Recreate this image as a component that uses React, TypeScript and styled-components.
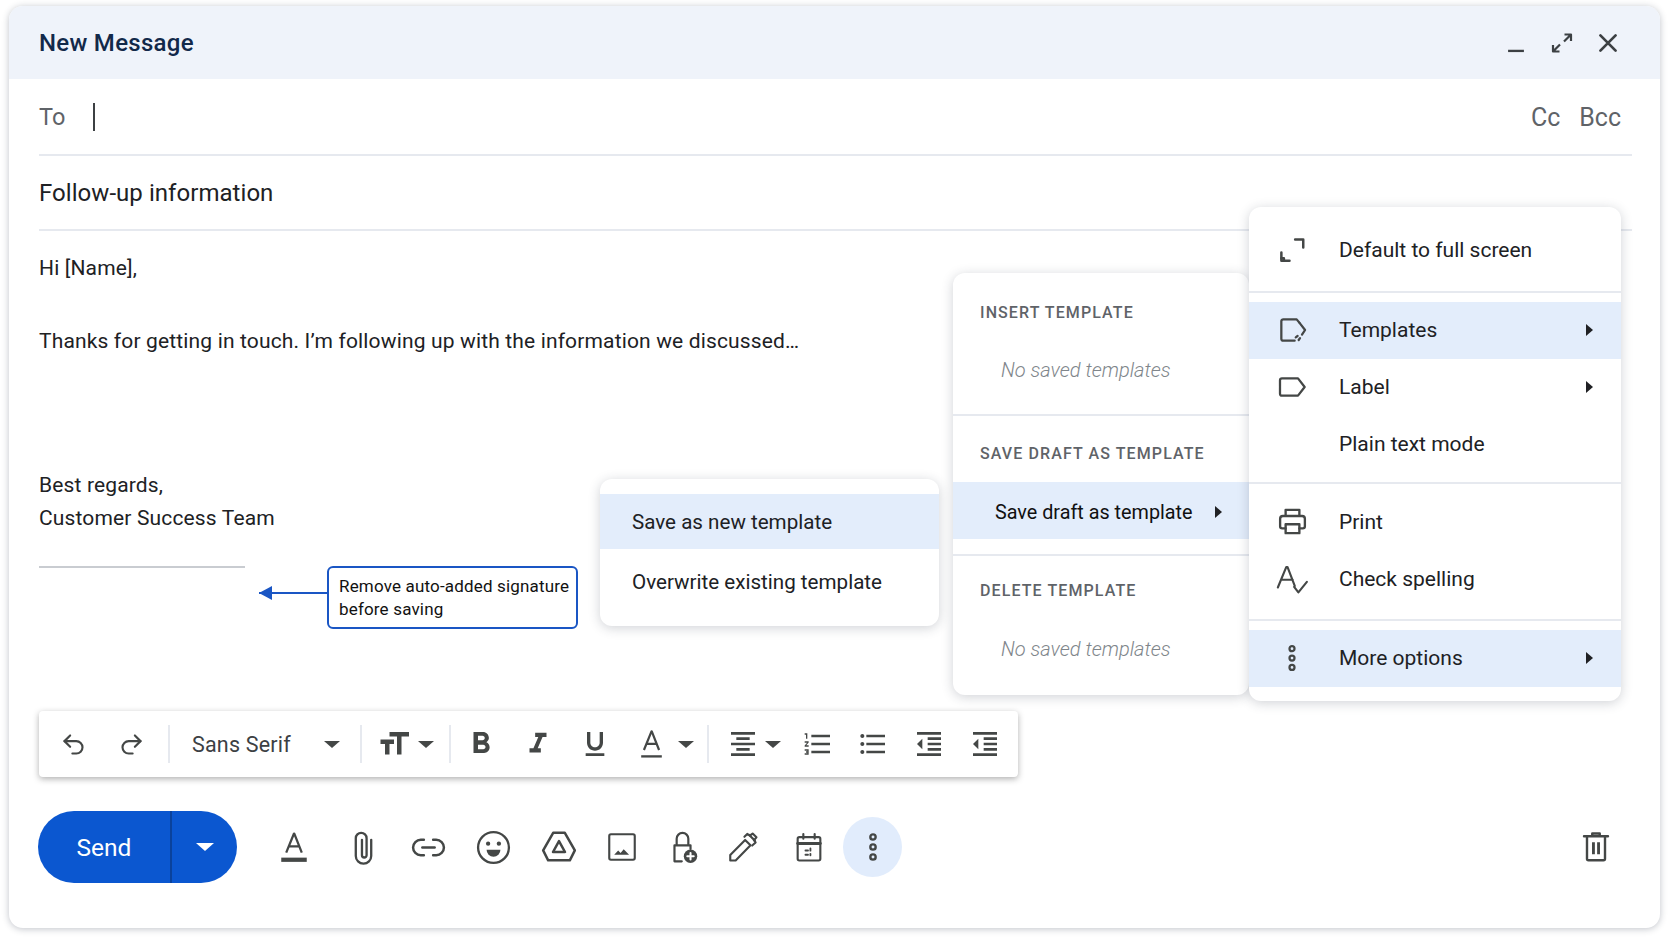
import React from 'react';
import styled, { createGlobalStyle } from 'styled-components';
import { Undo2, Redo2, Link2 } from 'lucide-react';
import {
  MdFormatSize,
  MdFormatBold,
  MdFormatItalic,
  MdFormatUnderlined,
  MdFormatAlignCenter,
  MdFormatListNumbered,
  MdFormatListBulleted,
  MdFormatIndentDecrease,
} from 'react-icons/md';

const GlobalStyle = createGlobalStyle`
  html, body {
    margin: 0;
    padding: 0;
    background: #ffffff;
    font-family: 'Roboto', 'Liberation Sans', sans-serif;
  }
  * { box-sizing: border-box; }
`;

const Page = styled.div`
  width: 1672px;
  height: 941px;
  padding: 6px 12px 13px 9px;
  overflow: hidden;
`;

const Window = styled.div`
  position: relative;
  height: 100%;
  display: flex;
  flex-direction: column;
  background: #ffffff;
  border-radius: 14px;
  box-shadow: 0 1px 7px rgba(30, 40, 60, 0.28);
`;

const Header = styled.div`
  height: 73px;
  flex-shrink: 0;
  display: flex;
  align-items: center;
  padding: 0 29px 0 30px;
  background: #eff3fa;
  border-radius: 14px 14px 0 0;
`;

const Title = styled.div`
  flex: 1;
  font-size: 24px;
  font-weight: 500;
  color: #12294a;
  letter-spacing: 0.3px;
`;

const WindowButton = styled.div`
  width: 46px;
  display: flex;
  justify-content: center;
  color: #3c4043;
`;

const FieldRow = styled.div<{ $height: number }>`
  height: ${p => p.$height}px;
  flex-shrink: 0;
  margin: 0 28px 0 30px;
  display: flex;
  align-items: center;
  border-bottom: 2px solid #e6e9ef;
`;

const ToLabel = styled.span`
  font-size: 23.5px;
  color: #5f6368;
  width: 54px;
`;

const Cursor = styled.span`
  width: 2px;
  height: 28px;
  background: #3c4043;
`;

const CopyLinks = styled.div`
  margin-left: auto;
  padding: 2px 11px 0 0;
  display: flex;
  gap: 19px;
  font-size: 25px;
  color: #5f6368;
`;

const Subject = styled.span`
  font-size: 24px;
  color: #202124;
  letter-spacing: 0.05px;
`;

const Body = styled.div`
  position: relative;
  flex: 1;
  padding: 21px 30px 0;
  font-size: 21px;
  line-height: 33px;
  letter-spacing: 0.15px;
  color: #202124;
`;

const Line = styled.div<{ $gap?: number }>`
  margin-top: ${p => p.$gap ?? 0}px;
`;

const SignatureRule = styled.div`
  width: 206px;
  height: 2px;
  margin-top: 31px;
  background: #c9ccd1;
`;

const Callout = styled.div`
  position: absolute;
  left: 318px;
  top: 335px;
  width: 251px;
  height: 63px;
  padding: 7px 0 0 10px;
  border: 2px solid #1a56c4;
  border-radius: 6px;
  background: #ffffff;
  font-size: 17px;
  line-height: 23px;
  letter-spacing: 0.17px;
  color: #111111;
`;

const CalloutArrow = styled.div`
  position: absolute;
  right: 100%;
  top: 24px;
  width: 70px;
  height: 2px;
  background: #1a56c4;

  &::before {
    content: '';
    position: absolute;
    left: 0;
    top: -6px;
    border-style: solid;
    border-width: 7px 13px 7px 0;
    border-color: transparent #1a56c4 transparent transparent;
  }
`;

const Menu = styled.div<{ $left: number; $top: number; $width: number; $z: number }>`
  position: absolute;
  left: ${p => p.$left}px;
  top: ${p => p.$top}px;
  width: ${p => p.$width}px;
  z-index: ${p => p.$z};
  background: #ffffff;
  border-radius: 12px;
  box-shadow: 0 2px 12px rgba(40, 50, 70, 0.22);
  overflow: hidden;
`;

const MenuGroup = styled.div<{ $top: number; $bottom: number; $last?: boolean }>`
  padding: ${p => p.$top}px 0 ${p => p.$bottom}px;
  border-bottom: ${p => (p.$last ? 'none' : '2px solid #e6e9ef')};
`;

const MenuRow = styled.div<{ $active?: boolean }>`
  height: 57px;
  display: flex;
  align-items: center;
  padding: 0 28px 2px 0;
  background: ${p => (p.$active ? '#e3edfb' : 'transparent')};
  font-size: 21px;
  color: #202124;
`;

const MenuIcon = styled.div`
  width: 90px;
  flex-shrink: 0;
  padding-right: 4px;
  display: flex;
  justify-content: center;
  color: #444746;
`;

const ArrowRight = styled.span`
  margin-left: auto;
  border-style: solid;
  border-width: 6px 0 6px 7px;
  border-color: transparent transparent transparent #202124;
`;

const SectionHeading = styled.div<{ $top: number; $bottom: number }>`
  padding: ${p => p.$top}px 27px ${p => p.$bottom}px;
  font-size: 16px;
  line-height: 20px;
  font-weight: 500;
  letter-spacing: 1.1px;
  color: #5f6368;
`;

const EmptyNote = styled.div<{ $bottom: number }>`
  padding: 0 0 ${p => p.$bottom}px 48px;
  font-size: 20px;
  line-height: 28px;
  font-style: italic;
  font-weight: 300;
  color: #80868b;
`;

const DraftRow = styled.div`
  height: 57px;
  display: flex;
  align-items: center;
  padding: 3px 27px 0 42px;
  background: #e3edfb;
  font-size: 19.8px;
  color: #111111;
`;

const SaveRow = styled.div<{ $active?: boolean }>`
  height: 55px;
  margin-top: ${p => (p.$active ? 0 : 5)}px;
  display: flex;
  align-items: center;
  padding-left: 32px;
  background: ${p => (p.$active ? '#e3edfb' : 'transparent')};
  font-size: 20.6px;
  color: #202124;
`;

const SaveList = styled.div`
  padding: 15px 0 17px;
`;

const Toolbar = styled.div`
  height: 66px;
  width: 979px;
  flex-shrink: 0;
  margin-left: 30px;
  padding-left: 6px;
  display: flex;
  align-items: center;
  background: #ffffff;
  border-radius: 4px;
  box-shadow: 0 2px 6px rgba(30, 30, 30, 0.35);
  color: #444746;
`;

const ToolCell = styled.div<{ $w: number }>`
  width: ${p => p.$w}px;
  flex-shrink: 0;
  display: flex;
  align-items: center;
  justify-content: center;
`;

const ToolSeparator = styled.div<{ $left: number; $right: number }>`
  width: 2px;
  height: 38px;
  flex-shrink: 0;
  margin: 0 ${p => p.$right}px 0 ${p => p.$left}px;
  background: #e6e9ef;
`;

const Caret = styled.span<{ $color?: string; $size?: number; $left?: number; $right?: number }>`
  flex-shrink: 0;
  margin: 0 ${p => p.$right ?? 0}px 0 ${p => p.$left ?? 0}px;
  border-style: solid;
  border-width: ${p => p.$size ?? 7}px ${p => (p.$size ?? 7) + 1}px 0;
  border-color: ${p => p.$color ?? '#444746'} transparent transparent;
`;

const FontSelect = styled.div`
  width: 190px;
  flex-shrink: 0;
  padding: 0 20px 0 22px;
  display: flex;
  align-items: center;
  justify-content: space-between;
  font-size: 21.5px;
  letter-spacing: 0.2px;
  color: #3c4043;
`;

const ActionBar = styled.div`
  flex: 0 0 151px;
  padding: 34px 30px 45px 29px;
  display: flex;
  align-items: center;
  color: #444746;
`;

const SendButton = styled.div`
  width: 199px;
  height: 72px;
  margin-right: 24px;
  flex-shrink: 0;
  display: flex;
  border-radius: 36px;
  background: #0b57d0;
  color: #ffffff;
  font-size: 24.5px;
`;

const SendLabel = styled.div`
  width: 134px;
  display: flex;
  align-items: center;
  justify-content: center;
  border-right: 2px solid #0a429c;
`;

const SendMenu = styled.div`
  flex: 1;
  display: flex;
  align-items: center;
  justify-content: center;
`;

const ActionCell = styled.div<{ $w: number }>`
  width: ${p => p.$w}px;
  flex-shrink: 0;
  display: flex;
  align-items: center;
  justify-content: center;
`;

const MoreCircle = styled.div`
  width: 59px;
  height: 60px;
  display: flex;
  align-items: center;
  justify-content: center;
  border-radius: 50%;
  background: #e1ecfc;
`;

const TrashCell = styled.div`
  margin-left: auto;
  padding: 0 16px 3px 0;
  display: flex;
`;

const Glyph = styled.svg.attrs({ viewBox: '0 0 24 24', fill: 'none', stroke: 'currentColor' })<{
  $size: number;
  $weight?: number;
}>`
  display: block;
  width: ${p => p.$size}px;
  height: ${p => p.$size}px;
  stroke-width: ${p => p.$weight ?? 1.8};
  stroke-linecap: round;
  stroke-linejoin: round;
`;

const Minimize = () => (
  <Glyph $size={20} $weight={2.8}>
    <path d="M2.5 21.5h19" strokeLinecap="butt" />
  </Glyph>
);
const Expand = () => (
  <Glyph $size={24} $weight={2.2}>
    <path d="M14.5 3.5H21V10M21 3.5 14 10.5M9.5 20.5H3V14M3 20.5l7-7" strokeLinecap="butt" />
  </Glyph>
);
const Close = () => (
  <Glyph $size={26} $weight={2.5}>
    <path d="M5 5l14 14M19 5 5 19" />
  </Glyph>
);
const FullScreen = () => (
  <Glyph $size={30} $weight={2}>
    <path d="M14.5 3.5H21V10M3.5 14v6.5H10" />
    <path d="M3.5 18.5h2v2" />
  </Glyph>
);
const Templates = () => (
  <Glyph $size={32} $weight={1.7}>
    <path d="M14 20H5.5A1.5 1.5 0 0 1 4 18.5v-13A1.5 1.5 0 0 1 5.5 4H15.5l2 2.5" />
    <path d="M17.5 6.5 21.8 12l-2.3 3.5" />
    <path d="M17 19.5l1-1.4M14.8 17.5l1.4-1" />
  </Glyph>
);
const Label = () => (
  <Glyph $size={32} $weight={1.7}>
    <path d="M4.5 5.5h12l5 6.5-5 6.5h-12A1.5 1.5 0 0 1 3 17V7a1.5 1.5 0 0 1 1.5-1.5z" />
  </Glyph>
);
const Printer = () => (
  <Glyph $size={33} $weight={1.7}>
    <path d="M7 8V3.5h10V8M7 17H4.5A1.5 1.5 0 0 1 3 15.5V10a2 2 0 0 1 2-2h14a2 2 0 0 1 2 2v5.5a1.5 1.5 0 0 1-1.5 1.5H17" />
    <path d="M7 14h10v6.5H7z" />
  </Glyph>
);
const SpellCheck = () => (
  <Glyph $size={34} $weight={1.5}>
    <path d="M2 18 8 3.5h.8L14 17M4.5 12.5h8M13.5 17.5l3 4 6-7.5" />
  </Glyph>
);
const Dots = ({ size }: { size: number }) => (
  <Glyph $size={size} fill="currentColor" stroke="none">
    <circle cx="12" cy="4.5" r="2" />
    <circle cx="12" cy="12" r="2" />
    <circle cx="12" cy="19.5" r="2" />
  </Glyph>
);
const TextColor = ({ size, heavy }: { size: number; heavy?: boolean }) => (
  <Glyph $size={size} $weight={1.6}>
    <path d="M6.5 16 12 2.5h.2L17.5 16M8.2 11.5h7.6" strokeLinecap="butt" />
    <path d={heavy ? 'M3 19.5h18v3H3z' : 'M4.5 19.8h15v1.7h-15z'} fill="currentColor" stroke="none" />
  </Glyph>
);
const Paperclip = () => (
  <Glyph $size={37} $weight={1.5}>
    <path d="M17 7v10.5a5 5 0 0 1-10 0V6a3.5 3.5 0 0 1 7 0v11a1.5 1.5 0 0 1-3 0V7" />
  </Glyph>
);
const Smiley = () => (
  <Glyph $size={37} $weight={1.5}>
    <circle cx="12" cy="12" r="10" />
    <circle cx="8.5" cy="9.5" r="1.4" fill="currentColor" stroke="none" />
    <circle cx="15.5" cy="9.5" r="1.4" fill="currentColor" stroke="none" />
    <path d="M7.5 13.5h9a4.5 4.5 0 0 1-9 0z" fill="currentColor" stroke="none" />
  </Glyph>
);
const Drive = () => (
  <Glyph $size={40} $weight={1.5}>
    <path d="M8.5 3.5h7L21.5 14l-3 6h-13l-3-6z" />
    <path d="M12 8.5l3.6 6.5H8.4z" />
  </Glyph>
);
const ImageIcon = () => (
  <Glyph $size={34} $weight={1.5}>
    <rect x="3" y="3" width="18" height="18" rx="1.2" />
    <path d="M6.5 17.5l2.8-3 1.7 1.8 2.2-2.8 3.8 4z" fill="currentColor" stroke="none" />
  </Glyph>
);
const LockPlus = () => (
  <Glyph $size={35} $weight={1.5}>
    <path d="M8 10.5V6a4 4 0 0 1 8 0v4.5M11.5 21.5H6.5v-11h11v2.5" />
    <circle cx="17.5" cy="18" r="4.6" fill="currentColor" stroke="none" />
    <path d="M17.5 15.8v4.4M15.3 18h4.4" stroke="#ffffff" strokeWidth="1.4" />
  </Glyph>
);
const Pen = () => (
  <Glyph $size={34} $weight={1.5}>
    <path d="M3 21.5v-3.8L13.5 7l3.8 3.8L6.8 21.5z" />
    <path d="M13 4.8l2-2 1.8 1.2 2-1.5 2.7 2.7-1.8 2 1.2 1.6-2.4 2.2" />
    <path d="M16.4 3.5l4 4" />
  </Glyph>
);
const Calendar = () => (
  <Glyph $size={34} $weight={1.5}>
    <rect x="4" y="5" width="16" height="16.5" rx="1.2" />
    <path d="M4 9.5h16" strokeWidth="2" />
    <path d="M8 2.8v3.4M16 2.8v3.4" />
    <path d="M9.5 14.5h1.8M9.5 17.5h1.8M13 13v1.6M13 16.8v1" strokeWidth="1.3" />
  </Glyph>
);
const Trash = () => (
  <Glyph $size={36} $weight={1.6}>
    <path d="M4 5.5h16M9.5 5V3.7h5V5" />
    <path d="M6 6v14.5a1 1 0 0 0 1 1h10a1 1 0 0 0 1-1V6" />
    <path d="M10.3 9.5v8M13.7 9.5v8" strokeWidth="1.9" strokeLinecap="butt" />
  </Glyph>
);

const actions = [
  { w: 66, icon: <TextColor size={34} heavy /> },
  { w: 72, icon: <Paperclip /> },
  { w: 59, icon: <Link2 size={37} strokeWidth={1.6} /> },
  { w: 70, icon: <Smiley /> },
  { w: 62, icon: <Drive /> },
  { w: 63, icon: <ImageIcon /> },
  { w: 58, icon: <LockPlus /> },
  { w: 63, icon: <Pen /> },
  { w: 69, icon: <Calendar /> },
];

export default function App() {
  return (
    <Page>
      <GlobalStyle />
      <Window>
        <Header>
          <Title>New Message</Title>
          <WindowButton><Minimize /></WindowButton>
          <WindowButton><Expand /></WindowButton>
          <WindowButton><Close /></WindowButton>
        </Header>

        <FieldRow $height={77}>
          <ToLabel>To</ToLabel>
          <Cursor />
          <CopyLinks>
            <span>Cc</span>
            <span>Bcc</span>
          </CopyLinks>
        </FieldRow>
        <FieldRow $height={75}>
          <Subject>Follow-up information</Subject>
        </FieldRow>

        <Body>
          <Line>Hi [Name],</Line>
          <Line $gap={40}>Thanks for getting in touch. I’m following up with the information we discussed…</Line>
          <Line $gap={111}>Best regards,</Line>
          <Line>Customer Success Team</Line>
          <SignatureRule />
          <Callout>
            <CalloutArrow />
            Remove auto-added signature
            <br />
            before saving
          </Callout>
        </Body>

        <Toolbar>
          <ToolCell $w={57}><Undo2 size={27} strokeWidth={1.9} /></ToolCell>
          <ToolCell $w={58}><Redo2 size={27} strokeWidth={1.9} /></ToolCell>
          <ToolSeparator $left={8} $right={0} />
          <FontSelect>
            Sans Serif
            <Caret />
          </FontSelect>
          <ToolSeparator $left={0} $right={0} />
          <ToolCell $w={63}><MdFormatSize size={36} /></ToolCell>
          <Caret $left={-7} />
          <ToolSeparator $left={15} $right={1} />
          <ToolCell $w={57}><MdFormatBold size={36} /></ToolCell>
          <ToolCell $w={57}><MdFormatItalic size={34} /></ToolCell>
          <ToolCell $w={57}><MdFormatUnderlined size={32} /></ToolCell>
          <ToolCell $w={57}><TextColor size={33} /></ToolCell>
          <Caret $left={-2} />
          <ToolSeparator $left={13} $right={6} />
          <ToolCell $w={56}><MdFormatAlignCenter size={32} /></ToolCell>
          <Caret $left={-6} $right={9} />
          <ToolCell $w={55}><MdFormatListNumbered size={32} /></ToolCell>
          <ToolCell $w={55}><MdFormatListBulleted size={32} /></ToolCell>
          <ToolCell $w={57}><MdFormatIndentDecrease size={32} /></ToolCell>
          <ToolCell $w={55}><MdFormatIndentDecrease size={32} /></ToolCell>
        </Toolbar>

        <ActionBar>
          <SendButton>
            <SendLabel>Send</SendLabel>
            <SendMenu><Caret $color="#ffffff" $size={8} /></SendMenu>
          </SendButton>
          {actions.map((item, index) => (
            <ActionCell key={index} $w={item.w}>{item.icon}</ActionCell>
          ))}
          <MoreCircle><Dots size={32} /></MoreCircle>
          <TrashCell><Trash /></TrashCell>
        </ActionBar>

        <Menu $left={591} $top={473} $width={339} $z={1}>
          <SaveList>
            <SaveRow $active>Save as new template</SaveRow>
            <SaveRow>Overwrite existing template</SaveRow>
          </SaveList>
        </Menu>

        <Menu $left={944} $top={267} $width={296} $z={2}>
          <MenuGroup $top={0} $bottom={0}>
            <SectionHeading $top={30} $bottom={33}>INSERT TEMPLATE</SectionHeading>
            <EmptyNote $bottom={30}>No saved templates</EmptyNote>
          </MenuGroup>
          <MenuGroup $top={0} $bottom={15}>
            <SectionHeading $top={28} $bottom={18}>SAVE DRAFT AS TEMPLATE</SectionHeading>
            <DraftRow>
              Save draft as template
              <ArrowRight />
            </DraftRow>
          </MenuGroup>
          <MenuGroup $top={0} $bottom={0} $last>
            <SectionHeading $top={25} $bottom={34}>DELETE TEMPLATE</SectionHeading>
            <EmptyNote $bottom={32}>No saved templates</EmptyNote>
          </MenuGroup>
        </Menu>

        <Menu $left={1240} $top={201} $width={372} $z={3}>
          <MenuGroup $top={15} $bottom={12}>
            <MenuRow>
              <MenuIcon><FullScreen /></MenuIcon>
              Default to full screen
            </MenuRow>
          </MenuGroup>
          <MenuGroup $top={9} $bottom={9}>
            <MenuRow $active>
              <MenuIcon><Templates /></MenuIcon>
              Templates
              <ArrowRight />
            </MenuRow>
            <MenuRow>
              <MenuIcon><Label /></MenuIcon>
              Label
              <ArrowRight />
            </MenuRow>
            <MenuRow>
              <MenuIcon />
              Plain text mode
            </MenuRow>
          </MenuGroup>
          <MenuGroup $top={10} $bottom={11}>
            <MenuRow>
              <MenuIcon><Printer /></MenuIcon>
              Print
            </MenuRow>
            <MenuRow>
              <MenuIcon><SpellCheck /></MenuIcon>
              Check spelling
            </MenuRow>
          </MenuGroup>
          <MenuGroup $top={9} $bottom={14} $last>
            <MenuRow $active>
              <MenuIcon><Dots size={30} /></MenuIcon>
              More options
              <ArrowRight />
            </MenuRow>
          </MenuGroup>
        </Menu>
      </Window>
    </Page>
  );
}
